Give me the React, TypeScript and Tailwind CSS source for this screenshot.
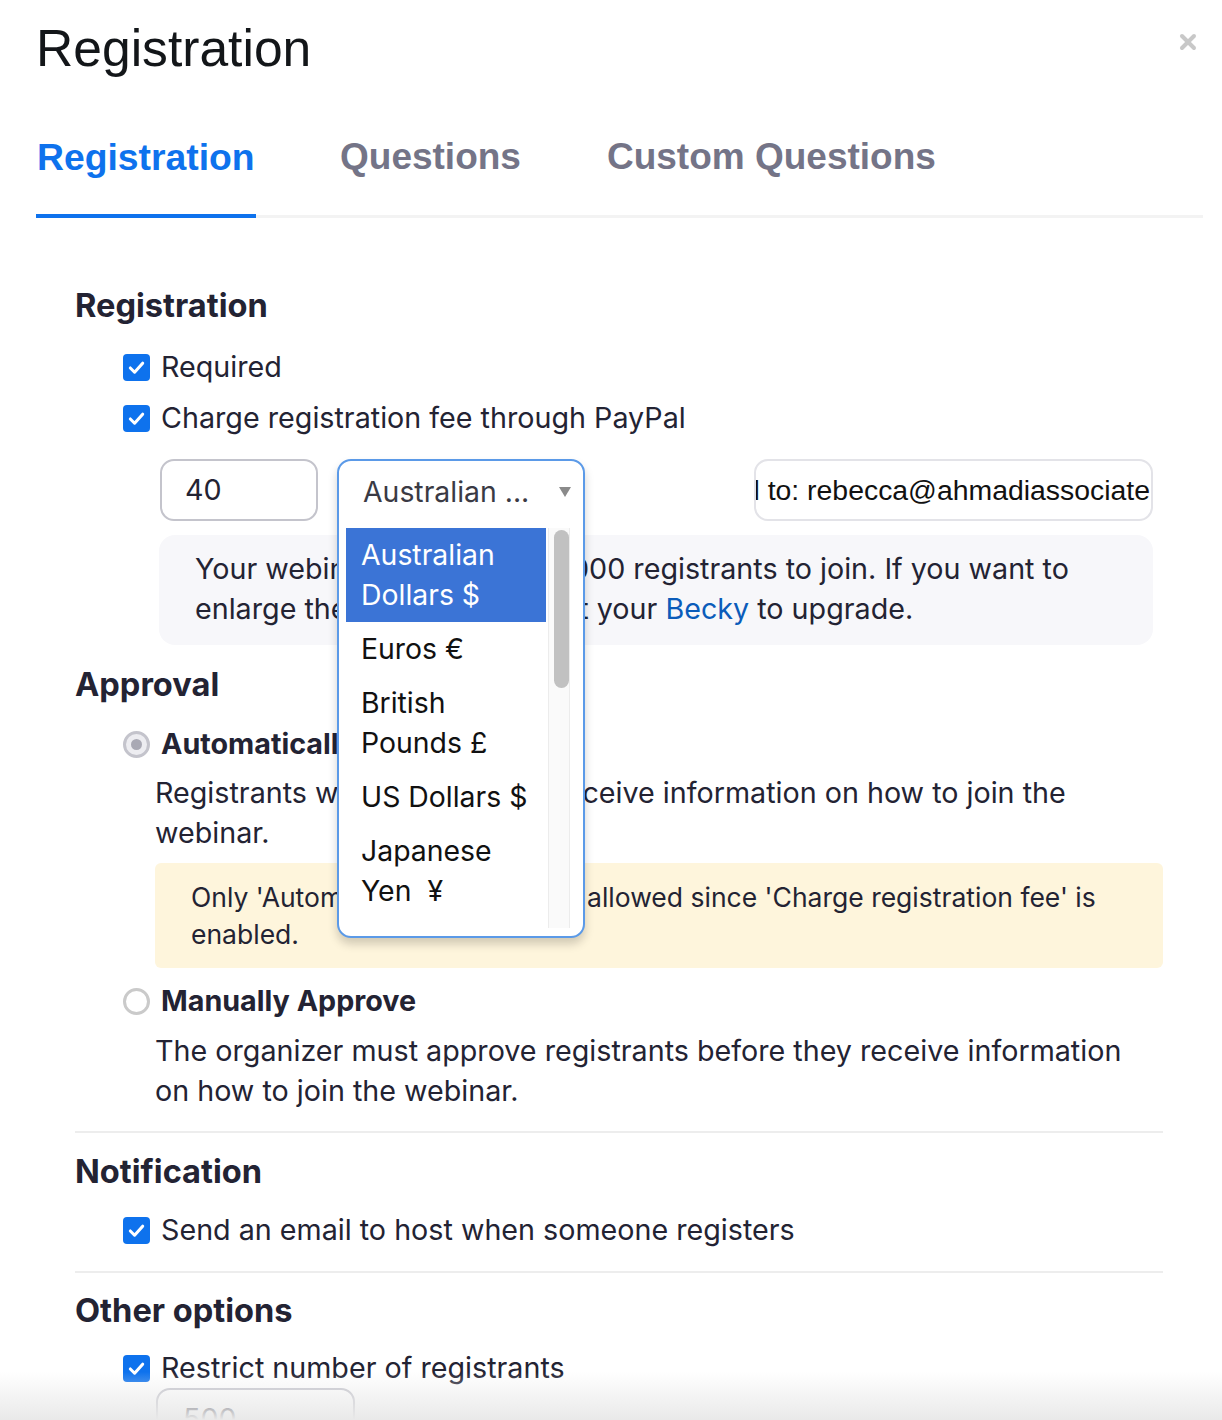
import { X } from "lucide-react";

const body = "font-['Inter',sans-serif]";

function Check() {
  return (
    <span className="flex h-[27px] w-[27px] shrink-0 items-center justify-center rounded-[4px] bg-[#0e72ed]">
      <svg width="19" height="19" viewBox="0 0 20 20" fill="none">
        <path d="M3.5 10.5 L8 15 L16.5 5.5" stroke="white" strokeWidth="3.2" strokeLinecap="round" strokeLinejoin="round" />
      </svg>
    </span>
  );
}

function CheckRow({ label, className = "" }: { label: string; className?: string }) {
  return (
    <div className={`ml-[47px] flex h-[40px] items-center gap-[11px] ${className}`}>
      <Check />
      <span className="text-[28.7px] leading-[40px] text-[#232333]">{label}</span>
    </div>
  );
}

function Heading({ children, className = "" }: { children: string; className?: string }) {
  return <h2 className={`-ml-[1px] text-[32.6px] font-bold leading-[40px] text-[#232333] ${className}`}>{children}</h2>;
}

const currencies = [
  { label: ["Australian", "Dollars $"], active: true },
  { label: ["Euros €"] },
  { label: ["British", "Pounds £"] },
  { label: ["US Dollars $"] },
  { label: ["Japanese", "Yen  ¥"] },
  { label: ["Canadian", "Dollars $"] },
];

function CurrencySelect() {
  return (
    <div className="relative h-[62px] w-[248px] shrink-0">
      <div className="absolute left-0 top-0 z-10 h-[479px] w-[248px] rounded-[14px] border-2 border-[#5b9ae8] bg-white shadow-[0_6px_10px_rgba(0,0,0,0.18)]">
        <div className="flex h-[62px] items-center justify-between pl-[24px] pr-[12px]">
          <span className="text-[28.4px] text-[#3a3a44]">Australian ...</span>
          <svg width="12" height="10" viewBox="0 0 12 10">
            <path d="M0 0 H12 L6 10 Z" fill="#8a8a8a" />
          </svg>
        </div>
        <div className="ml-[7px] mt-[5px] flex h-[400px]">
          <div className="w-[200px] overflow-hidden">
            {currencies.map((c) => (
              <div
                key={c.label.join(" ")}
                className={`py-[7px] pl-[15px] text-[28.4px] leading-[40px] ${c.active ? "bg-[#3b74d6] text-white" : "text-[#111]"}`}
              >
                {c.label.map((l) => (
                  <div key={l} className="whitespace-pre">{l}</div>
                ))}
              </div>
            ))}
          </div>
          <div className="ml-[2px] h-[400px] w-[22px] border-x border-[#ececec] bg-[#fafafa] px-[5px] pt-[2px]">
            <div className="h-[158px] w-[15px] rounded-full bg-[#c1c1c1]" />
          </div>
        </div>
      </div>
    </div>
  );
}

export default function App() {
  return (
    <div className={`relative h-[1420px] w-[1222px] overflow-hidden bg-white ${body}`}>
      <div className="flex items-start justify-between pl-[36px] pr-[22px]">
        <h1 className="h-[96px] font-['Liberation_Sans',Arial,sans-serif] text-[51.6px] leading-[96px] text-[#131619]">
          Registration
        </h1>
        <X className="mt-[30px] text-[#c8c8c8]" size={24} strokeWidth={4} />
      </div>

      <div className="ml-[36px] mr-[19px] flex border-b-[3px] border-[#f3f3f3] pt-[39px] font-['Liberation_Sans',Arial,sans-serif] text-[37px] font-bold leading-[44px]">
        <div className="-mb-[3px] w-[220px] border-b-4 border-[#0e72ed] pb-[35px] pl-[1px] text-[37.3px] text-[#0e72ed]">Registration</div>
        <div className="ml-[84px] pb-[35px] text-[#747487]">Questions</div>
        <div className="ml-[86px] pb-[35px] text-[#747487]">Custom Questions</div>
      </div>

      <div className="pl-[76px] pr-[59px]">
        <Heading className="mt-[67px]">Registration</Heading>
        <CheckRow label="Required" className="mt-[22px]" />
        <CheckRow label="Charge registration fee through PayPal" className="mt-[11px]" />

        <div className="ml-[84px] mt-[21px] flex h-[62px] items-start">
          <div className="flex h-[62px] w-[158px] items-center rounded-[14px] border-2 border-[#c4c4cc] pl-[23px] text-[28.7px] text-[#232333]">
            40
          </div>
          <div className="ml-[19px]">
            <CurrencySelect />
          </div>
          <div className="ml-[169px] flex h-[62px] w-[399px] items-center justify-end overflow-hidden whitespace-nowrap rounded-[14px] border-2 border-[#e3e3e8] pr-[1px] font-['Liberation_Sans',Arial,sans-serif] text-[28.4px] text-[#111]">
            <span className="shrink-0">Payment notice will be sent by email to: rebecca@ahmadiassociate</span>
          </div>
        </div>

        <div className="ml-[83px] mt-[14px] w-[994px] rounded-[16px] bg-[#f7f7fa] pb-[16px] pl-[36px] pt-[14px] text-[28.7px] leading-[40px] text-[#232333]">
          Your webinar allows up to 1,000 registrants to join. If you want to
          <br />
          enlarge the capacity, contact your <span className="text-[#0b5cba]">Becky</span> to upgrade.
        </div>

        <Heading className="mt-[19px]">Approval</Heading>
        <div className="ml-[47px] mt-[20px] flex h-[40px] items-center gap-[11px]">
          <span className="flex h-[27px] w-[27px] items-center justify-center rounded-full border-[3px] border-[#c4c4cc] bg-[#ededf1]">
            <span className="h-[11px] w-[11px] rounded-full bg-[#a9a9b4]" />
          </span>
          <span className="text-[28.7px] font-bold text-[#232333]">Automatically Approve</span>
        </div>
        <p className="ml-[79px] mt-[9px] text-[28.7px] leading-[40px] text-[#232333]">
          Registrants will automatically receive information on how to join the
          <br />
          webinar.
        </p>
        <div className="ml-[79px] mt-[10px] rounded-[6px] bg-[#fef5dc] pb-[15px] pl-[36px] pt-[16px] text-[26.5px] leading-[37px] text-[#232333]">
          Only 'Automatically Approve' is allowed since 'Charge registration fee' is
          <br />
          enabled.
        </div>

        <div className="ml-[47px] mt-[13px] flex h-[40px] items-center gap-[11px]">
          <span className="h-[27px] w-[27px] rounded-full border-[3px] border-[#cacaca] bg-white" />
          <span className="text-[28.7px] font-bold text-[#232333]">Manually Approve</span>
        </div>
        <p className="ml-[79px] mt-[10px] text-[28.7px] leading-[40px] text-[#232333]">
          The organizer must approve registrants before they receive information
          <br />
          on how to join the webinar.
        </p>

        <div className="-ml-[1px] mt-[20px] h-[2px] bg-[#ededed]" />
        <Heading className="mt-[18px]">Notification</Heading>
        <CheckRow label="Send an email to host when someone registers" className="mt-[19px]" />

        <div className="-ml-[1px] mt-[21px] h-[2px] bg-[#ededed]" />
        <Heading className="mt-[17px]">Other options</Heading>
        <CheckRow label="Restrict number of registrants" className="mt-[18px]" />
        <div className="ml-[80px] flex h-[62px] w-[199px] items-center rounded-[14px] border-2 border-[#c4c4cc] pl-[25px] text-[28.7px] text-[#232333]">
          500
        </div>
      </div>

      <div className="pointer-events-none absolute bottom-0 left-0 h-[48px] w-full bg-gradient-to-b from-transparent to-[#e9e9e9]" />
    </div>
  );
}
